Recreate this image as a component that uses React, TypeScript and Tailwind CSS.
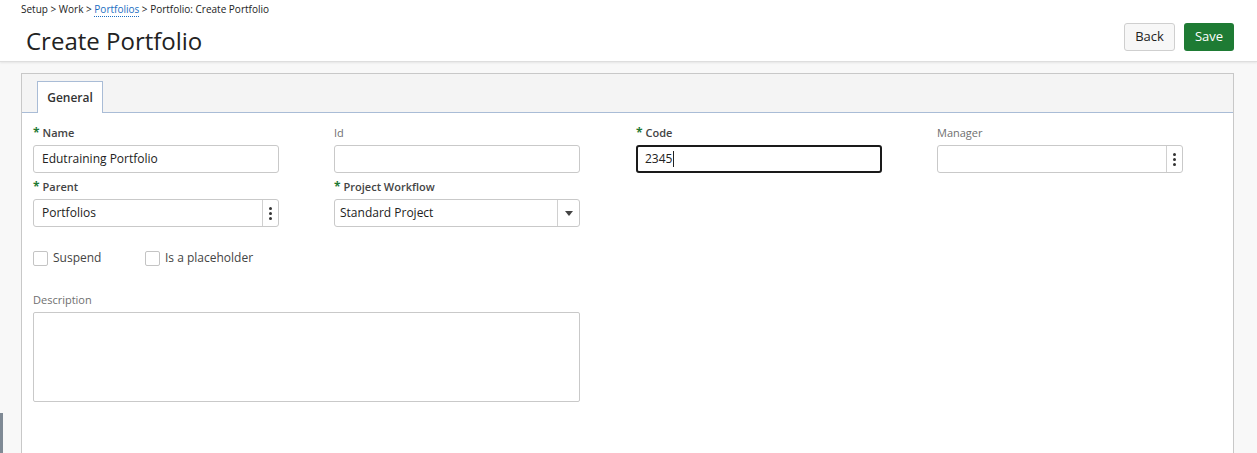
import React from "react";

const font = { fontFamily: '"Open Sans", "Noto Sans", Arial, sans-serif' };

function Label({ text, required, muted }: { text: string; required?: boolean; muted?: boolean }) {
  return (
    <div className={`h-[18px] flex items-end pb-px text-[11px] leading-4 ${muted ? "text-[#6f6f6f]" : "text-[#444]"}`}>
      {required && <span className="text-[#1f7a35] font-bold mr-[3px] text-[12px]">*</span>}
      <span className={required ? "font-semibold" : ""}>{text}</span>
    </div>
  );
}

function Dots() {
  return (
    <div className="w-[16px] h-full border-l border-[#d0d0d0] flex flex-col items-center justify-center gap-[2px]">
      <span className="w-[3px] h-[3px] rounded-full bg-[#333]" />
      <span className="w-[3px] h-[3px] rounded-full bg-[#333]" />
      <span className="w-[3px] h-[3px] rounded-full bg-[#333]" />
    </div>
  );
}

function Field({
  label,
  required,
  muted,
  value,
  right,
  focused,
  select,
}: {
  label: string;
  required?: boolean;
  muted?: boolean;
  value?: string;
  right?: React.ReactNode;
  focused?: boolean;
  select?: boolean;
}) {
  return (
    <div className="w-[246px] flex flex-col gap-[3px]">
      <Label text={label} required={required} muted={muted} />
      <div
        className={`h-[28px] flex items-stretch bg-white rounded-[3px] ${
          focused ? "border-2 border-[#1a1a1a]" : "border border-[#c9c9c9]"
        }`}
      >
        <div
          className={`flex-1 flex items-center text-[12px] text-[#222] ${
            focused ? "pl-[7px]" : select ? "pl-[5px]" : "pl-[8px]"
          }`}
        >
          {value}
          {focused && <span className="inline-block w-px h-[16px] bg-[#222] ml-[1px]" />}
        </div>
        {right}
      </div>
    </div>
  );
}

function Checkbox({ label }: { label: string }) {
  return (
    <label className="flex items-center gap-[5px] text-[12px] text-[#444]">
      <span className="w-[15px] h-[15px] border border-[#c4c4c4] rounded-[2px] bg-white" />
      {label}
    </label>
  );
}

export default function App() {
  return (
    <div className="relative w-[1257px] h-[453px] overflow-hidden bg-[#f8f8f8]" style={font}>
      <header className="h-[62px] bg-white border-b border-[#dedede] shadow-[0_1px_2px_rgba(0,0,0,0.08)] flex justify-between">
        <div className="pl-[21px] pt-[2px]">
          <div className="text-[10px] leading-[14px] text-[#222]">
            Setup &gt; Work &gt;{" "}
            <span className="text-[#1b6ec2] border-b border-dotted border-[#1b6ec2]">Portfolios</span> &gt; Portfolio:
            Create Portfolio
          </div>
          <h1 className="mt-[9px] ml-[5px] text-[24px] leading-[32px] text-[#222]">Create Portfolio</h1>
        </div>
        <div className="flex gap-[9px] pt-[23px] pr-[23px]">
          <button className="h-[28px] w-[51px] bg-[#f7f7f7] border border-[#cfcfcf] rounded-[3px] text-[13px] text-[#222]">
            Back
          </button>
          <button className="h-[28px] w-[50px] bg-[#1e7b34] rounded-[3px] text-[13px] text-white">Save</button>
        </div>
      </header>

      <div className="pt-[11px] pl-[21px] pr-[23px]">
        <div className="border border-[#c8c8c8] bg-white h-[400px]">
          <div className="h-[39px] bg-[#f4f4f4] border-b border-[#a9bcd6] flex items-end pl-[15px]">
            <div className="w-[66px] h-[32px] -mb-px bg-white border border-b-0 border-[#a9bcd6] flex items-center justify-center text-[12px] font-semibold text-[#333]">
              General
            </div>
          </div>
          <div className="pl-[11px] pt-[11px]">
            <div className="flex">
              <Field label="Name" required value="Edutraining Portfolio" />
              <div className="ml-[55px]">
                <Field label="Id" muted />
              </div>
              <div className="ml-[56px]">
                <Field label="Code" required value="2345" focused />
              </div>
              <div className="ml-[55px]">
                <Field label="Manager" muted right={<Dots />} />
              </div>
            </div>
            <div className="flex gap-[55px] mt-[5px]">
              <Field label="Parent" required value="Portfolios" right={<Dots />} />
              <Field
                label="Project Workflow"
                required
                select
                value="Standard Project"
                right={
                  <div className="w-[22px] h-full border-l border-[#d0d0d0] flex items-center justify-center">
                    <svg width="8" height="5" viewBox="0 0 8 5">
                      <path d="M0 0 L8 0 L4 5 Z" fill="#444" />
                    </svg>
                  </div>
                }
              />
            </div>
            <div className="flex mt-[23px] h-[16px] items-center">
              <div className="w-[112px]">
                <Checkbox label="Suspend" />
              </div>
              <Checkbox label="Is a placeholder" />
            </div>
            <div className="mt-[25px] flex flex-col gap-[3px]">
              <Label text="Description" muted />
              <div className="w-[547px] h-[90px] border border-[#c9c9c9] rounded-[2px] bg-white" />
            </div>
          </div>
        </div>
      </div>

      <div className="absolute left-0 top-[413px] w-[3px] h-[40px] bg-[#7f8a95]" />
    </div>
  );
}
